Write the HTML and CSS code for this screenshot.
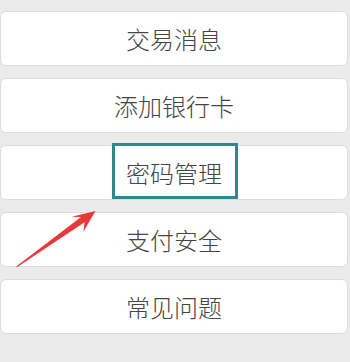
FILE: index.html
```html
<!DOCTYPE html>
<html lang="zh-CN">
<head>
<meta charset="utf-8">
<link rel="stylesheet" href="styles.css">
</head>
<body>
<div class="page">
  <div class="list">
    <div class="item">交易消息</div>
    <div class="item">添加银行卡</div>
    <div class="item item-marked">密码管理<span class="mark"></span></div>
    <div class="item">支付安全</div>
    <div class="item">常见问题</div>
  </div>
  <svg class="arrow" width="350" height="362" viewBox="0 0 350 362">
    <polygon fill="#e8383a" points="95.5,211 83.3,231.7 84.6,222.3 17,267.2 16.2,266.4 81,217.1 71.7,216.7"/>
  </svg>
</div>
</body>
</html>
```
FILE: styles.css
```css
html, body {
  margin: 0;
  padding: 0;
  background: #ebebeb;
}
.page {
  position: relative;
  width: 350px;
  height: 362px;
  overflow: hidden;
  font-family: "Noto Sans CJK SC", "Noto Sans", sans-serif;
}
.list {
  display: flex;
  flex-direction: column;
  gap: 12px;
  padding-top: 11px;
}
.item {
  position: relative;
  box-sizing: border-box;
  width: 348px;
  height: 55px;
  background: #fff;
  border: 1px solid #dcdcdc;
  border-radius: 6px;
  display: flex;
  align-items: center;
  justify-content: center;
  font-size: 24px;
  font-weight: 300;
  color: #444;
  line-height: 1;
}
.mark {
  position: absolute;
  left: 111px;
  top: -3px;
  width: 126px;
  height: 56px;
  box-sizing: border-box;
  border: 3px solid #2b8a8a;
}
.arrow {
  position: absolute;
  left: 0;
  top: 0;
}
```
